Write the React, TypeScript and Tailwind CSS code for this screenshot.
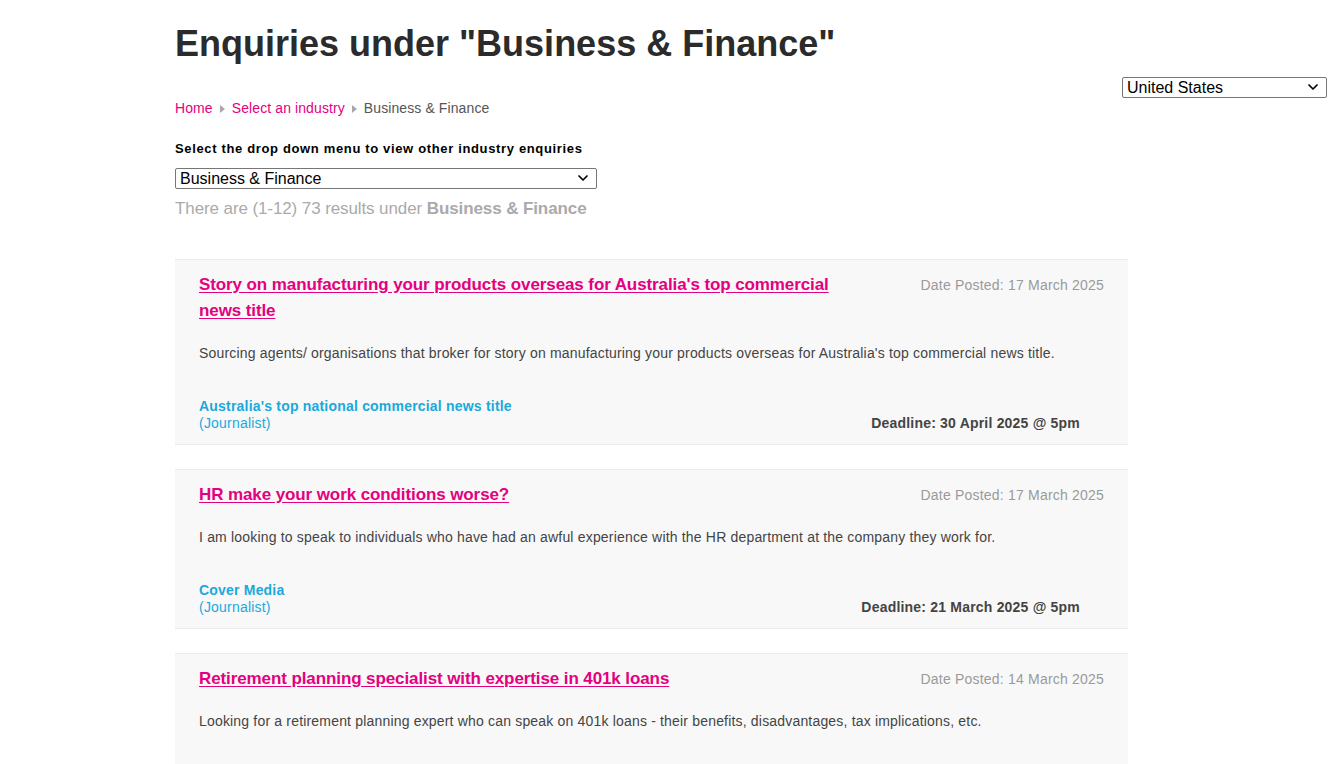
import React from 'react';
import { ChevronDown } from 'lucide-react';

interface Enquiry {
  title: string;
  posted: string;
  summary: string;
  outlet: string;
  role: string;
  deadline: string;
}

const enquiries: Enquiry[] = [
  {
    title: "Story on manufacturing your products overseas for Australia's top commercial news title",
    posted: '17 March 2025',
    summary:
      "Sourcing agents/ organisations that broker for story on manufacturing your products overseas for Australia's top commercial news title.",
    outlet: "Australia's top national commercial news title",
    role: 'Journalist',
    deadline: '30 April 2025 @ 5pm',
  },
  {
    title: 'HR make your work conditions worse?',
    posted: '17 March 2025',
    summary:
      'I am looking to speak to individuals who have had an awful experience with the HR department at the company they work for.',
    outlet: 'Cover Media',
    role: 'Journalist',
    deadline: '21 March 2025 @ 5pm',
  },
  {
    title: 'Retirement planning specialist with expertise in 401k loans',
    posted: '14 March 2025',
    summary:
      'Looking for a retirement planning expert who can speak on 401k loans - their benefits, disadvantages, tax implications, etc.',
    outlet: 'Freelance',
    role: 'Journalist',
    deadline: '28 March 2025 @ 5pm',
  },
];

function Crumb() {
  return (
    <svg width="5" height="8" viewBox="0 0 5 8" className="mx-[7px] mt-[2px]">
      <path d="M0 0 L5 4 L0 8 Z" fill="#a8a8a8" />
    </svg>
  );
}

// native select with a flat chevron drawn on top; caller sets position + width
function Dropdown({ options, className }: { options: string[]; className: string }) {
  return (
    <div className={`h-[21px] ${className}`}>
      <select className="h-full w-full appearance-none rounded-[2px] border border-[#767676] bg-white pl-[4px] text-[16px] leading-[19px] text-black">
        {options.map((o) => (
          <option key={o}>{o}</option>
        ))}
      </select>
      <ChevronDown
        size={16}
        strokeWidth={2.6}
        className="pointer-events-none absolute right-[6px] top-[3px] text-black"
      />
    </div>
  );
}

function EnquiryCard({ item }: { item: Enquiry }) {
  return (
    <div className="bg-[#f8f8f8] border-y border-[#ebebeb] px-6 pt-[12px] pb-[12px]">
      <div className="flex justify-between">
        <a
          href="#"
          className="w-[650px] text-[17px] leading-[26px] font-bold text-[#e4007f] underline underline-offset-2 tracking-[-0.1px]"
        >
          {item.title}
        </a>
        <span className="text-[14px] leading-[26px] text-[#9a9a9a] tracking-[0.2px]">
          Date Posted: {item.posted}
        </span>
      </div>
      <p className="mt-[19px] text-[14px] leading-[20px] text-[#444] tracking-[0.18px]">{item.summary}</p>
      <div className="mt-[35px] flex items-end justify-between pr-6">
        <div className="text-[14px] leading-[17px] text-[#1aa9dc] tracking-[0.2px]">
          <div className="font-bold">{item.outlet}</div>
          <div>({item.role})</div>
        </div>
        <div className="text-[14px] leading-[17px] font-bold text-[#444] tracking-[0.2px]">
          Deadline: {item.deadline}
        </div>
      </div>
    </div>
  );
}

export default function App() {
  return (
    <div className="relative min-h-screen bg-white font-['Liberation_Sans',Arial,sans-serif]">
      <Dropdown
        options={['United States', 'Australia', 'United Kingdom']}
        className="absolute right-4 top-[76px] w-[205px]"
      />

      <div className="ml-[175px] w-[953px] pt-[22px]">
        <h1 className="text-[36px] leading-[44px] font-bold text-[#2b2b2b]">
          Enquiries under "Business &amp; Finance"
        </h1>

        <nav className="mt-[32px] flex items-center text-[14px] leading-[20px] tracking-[0.1px]">
          <a href="#" className="text-[#e4007f]">Home</a>
          <Crumb />
          <a href="#" className="text-[#e4007f]">Select an industry</a>
          <Crumb />
          <span className="text-[#555]">Business &amp; Finance</span>
        </nav>

        <p className="mt-[21px] text-[13px] leading-[20px] font-bold text-black tracking-[0.65px]">
          Select the drop down menu to view other industry enquiries
        </p>
        <Dropdown
          options={['Business & Finance', 'Health & Wellbeing', 'Technology']}
          className="relative mt-[8px] w-[422px]"
        />
        <p className="mt-[10px] text-[17px] leading-[22px] text-[#aaa] tracking-[-0.1px]">
          There are (1-12) 73 results under <b>Business &amp; Finance</b>
        </p>

        <div className="mt-[39px] flex flex-col gap-[24px]">
          {enquiries.map((item) => (
            <EnquiryCard key={item.title} item={item} />
          ))}
        </div>
      </div>
    </div>
  );
}
